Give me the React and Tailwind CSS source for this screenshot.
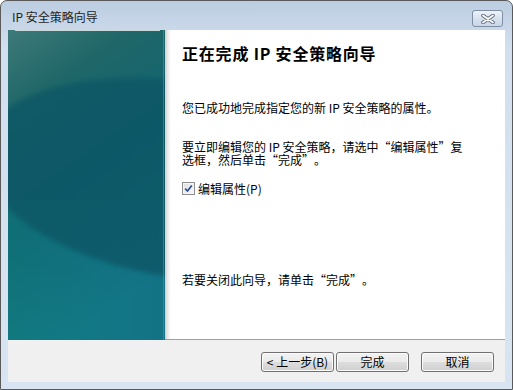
import React from 'react';

const font = "font-['Noto_Sans_CJK_SC',sans-serif]";

// full-width quote marks, as the dialog font draws them
function Open() {
  return <span className="inline-block w-[12px] text-right">“</span>;
}
function Close() {
  return <span className="inline-block w-[12px] text-left">”</span>;
}

function SidePanel() {
  return (
    <svg width="157" height="310" viewBox="0 0 157 310" className="block shrink-0">
      <defs>
        <linearGradient id="base" x1="0" y1="0" x2="0.35" y2="1">
          <stop offset="0" stopColor="#3e7a79" />
          <stop offset="0.25" stopColor="#1f6668" />
          <stop offset="0.6" stopColor="#0e6572" />
          <stop offset="1" stopColor="#127a84" />
        </linearGradient>
        <linearGradient id="tint" x1="0" y1="0" x2="1" y2="0">
          <stop offset="0" stopColor="#13807f" stopOpacity="0.35" />
          <stop offset="1" stopColor="#15658a" stopOpacity="0.35" />
        </linearGradient>
        <filter id="soft" x="-20%" y="-20%" width="140%" height="140%">
          <feGaussianBlur stdDeviation="2" />
        </filter>
      </defs>
      <rect width="157" height="310" fill="url(#base)" />
      <rect y="170" width="157" height="140" fill="url(#tint)" />
      <ellipse cx="175" cy="150" rx="205" ry="98" transform="rotate(9 175 150)" fill="#0b5766" opacity="0.8" filter="url(#soft)" />
      <rect x="7" y="0" width="145" height="1" fill="#c9d9d9" />
      <rect x="155" y="0" width="1" height="310" fill="#5e8e98" opacity="0.6" />
    </svg>
  );
}

function Checkbox() {
  return (
    <span className="w-[13px] h-[13px] border border-[#8e8f8f] bg-[linear-gradient(135deg,#dedede,#fbfbfb)] shadow-[inset_0_0_0_1px_#f4f4f4] flex items-center justify-center shrink-0">
      <svg width="9" height="9" viewBox="0 0 9 9">
        <path d="M1.2 4.6 L3.5 7 L7.8 1.5" fill="none" stroke="#2a4a95" strokeWidth="1.7" />
      </svg>
    </span>
  );
}

function Button({ children, className = '' }) {
  return (
    <button className={`w-[73px] h-[20px] border border-[#707070] rounded-[3px] bg-[linear-gradient(#f2f2f2,#ebebeb_48%,#dddddd_52%,#cfcfcf)] shadow-[inset_0_0_0_1px_#fbfbfb] text-[12px] leading-none text-black flex items-center justify-center ${className}`}>
      {children}
    </button>
  );
}

export default function App() {
  return (
    <div lang="zh-CN" className={`w-[513px] h-[390px] border border-[#5a5a5a] rounded-t-[7px] bg-[linear-gradient(#bccde1,#d2dfee_12%,#d8e4f1)] flex flex-col ${font}`}>
      <div className="h-[29px] shrink-0 flex items-start justify-between pl-[11px] pr-[9px]">
        <span className="mt-[8px] text-[12px] leading-[16px] text-[#1f1f1f]">IP 安全策略向导</span>
        <div className="mt-[9px] w-[31px] h-[17px] border border-[#7f8ea3] rounded-[3px] bg-[linear-gradient(#eef3f9,#d7e2ef_50%,#c8d6e7)] flex items-center justify-center">
          <svg width="14" height="10" viewBox="0 0 14 10">
            <path d="M2 1.5 L12 8.5 M12 1.5 L2 8.5" stroke="#5d6a7c" strokeWidth="3.6" strokeLinecap="round" />
            <path d="M2 1.5 L12 8.5 M12 1.5 L2 8.5" stroke="#ffffff" strokeWidth="1.8" strokeLinecap="round" />
          </svg>
        </div>
      </div>

      <div className="mx-[7px] h-[352px] shrink-0 flex flex-col bg-[#f0f0f0]">
        <div className="h-[310px] flex">
          <SidePanel />
          <div className="flex-1 flex bg-white border-b border-[#a0a0a0]">
            <div className="w-[6px] bg-[linear-gradient(to_right,#cfcfcf,#ececec_50%,#ffffff)]" />
            <div className="flex-1 pl-[11px] text-black">
              <h1 className="pt-[13px] text-[16px] leading-[20px] font-bold tracking-[0.8px]">正在完成 IP 安全策略向导</h1>
              <p className="mt-[38px] text-[12px] leading-[13px]">您已成功地完成指定您的新 IP 安全策略的属性。</p>
              <p className="mt-[26px] text-[12px] leading-[13px]">
                要立即编辑您的 IP 安全策略，请选中<Open />编辑属性<Close />复<br />选框，然后单击<Open />完成<Close />。
              </p>
              <label className="mt-[16px] flex items-center h-[13px] text-[12px] leading-[13px]">
                <Checkbox />
                <span className="ml-[3px]">编辑属性(P)</span>
              </label>
              <p className="mt-[78px] text-[12px] leading-[13px]">若要关闭此向导，请单击<Open />完成<Close />。</p>
            </div>
          </div>
        </div>
        <div className="flex justify-end pt-[12px] pr-[11px]">
          <Button>&lt; 上一步(B)</Button>
          <Button className="ml-[2px]">完成</Button>
          <Button className="ml-[12px]">取消</Button>
        </div>
      </div>
    </div>
  );
}
